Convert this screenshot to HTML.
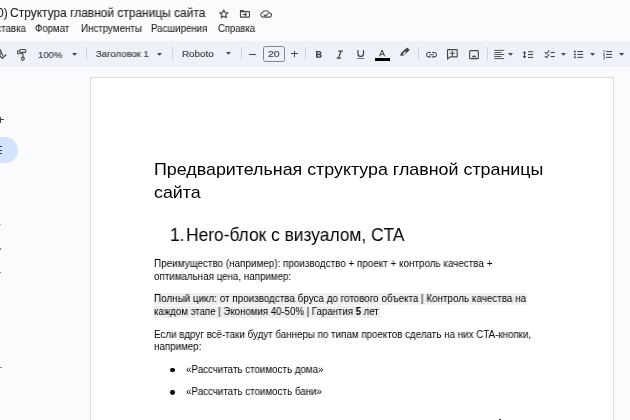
<!DOCTYPE html>
<html><head><meta charset="utf-8"><style>
html,body{margin:0;padding:0}
body{width:630px;height:420px;overflow:hidden;position:relative;background:#f9fbfd;font-family:"Liberation Sans",sans-serif}
.t{position:absolute;white-space:nowrap;transform-origin:0 0;will-change:transform;font-family:"Liberation Sans",sans-serif}
.sep{position:absolute;top:47.4px;width:1px;height:13px;background:#d0d3d7}
</style></head><body>
<div style="position:absolute;left:0;top:41px;width:630px;height:26px;background:#eef2f8"></div>
<div style="position:absolute;left:90px;top:77px;width:522px;height:360px;background:#fff;border:1px solid #dadce0"></div>
<div style="position:absolute;left:-20px;top:136.7px;width:38.2px;height:26.8px;border-radius:13.4px;background:#d3e3fd"></div>
<div class="sep" style="left:85.5px"></div>
<div class="sep" style="left:172px"></div>
<div class="sep" style="left:241.3px"></div>
<div class="sep" style="left:305.3px"></div>
<div class="sep" style="left:418.2px"></div>
<div class="sep" style="left:487.2px"></div>
<div style="position:absolute;left:262.9px;top:46.4px;width:20px;height:13.6px;border:1px solid #80868b;border-radius:2.5px"></div>
<div style="position:absolute;left:249.2px;top:53.5px;width:6.7px;height:1px;background:#444746"></div>
<div style="position:absolute;left:291.4px;top:53.3px;width:6.7px;height:1.2px;background:#444746"></div>
<div style="position:absolute;left:294.15px;top:50.6px;width:1.2px;height:6.7px;background:#444746"></div>
<div style="position:absolute;left:-2.3px;top:119.15px;width:6.3px;height:1.1px;background:#444746"></div>
<div style="position:absolute;left:0.35px;top:116.5px;width:1.1px;height:6.4px;background:#444746"></div>
<div style="position:absolute;left:0;top:146px;width:2px;height:1.3px;background:#444746"></div>
<div style="position:absolute;left:0;top:149.6px;width:2px;height:1.3px;background:#444746"></div>
<div style="position:absolute;left:0;top:153.2px;width:2px;height:1.3px;background:#444746"></div>
<div style="position:absolute;left:153.8px;top:293px;width:373.2px;height:11.5px;background:#efefef"></div>
<div style="position:absolute;left:153.8px;top:306px;width:225.8px;height:11.6px;background:#efefef"></div>
<div style="position:absolute;left:170.3px;top:367.6px;width:4.8px;height:4.8px;border-radius:50%;background:#000"></div>
<div style="position:absolute;left:170.3px;top:389.9px;width:4.8px;height:4.8px;border-radius:50%;background:#000"></div>
<div style="position:absolute;left:498.8px;top:418.6px;width:2.2px;height:1.4px;background:#333"></div>
<div style="position:absolute;left:0;top:224.3px;width:1px;height:1.2px;background:#a8b4f0"></div>
<div style="position:absolute;left:0;top:248.4px;width:1.2px;height:1.2px;background:#888"></div>
<div style="position:absolute;left:0;top:271.9px;width:1.2px;height:1.2px;background:#888"></div>
<div style="position:absolute;left:0;top:366.8px;width:1.6px;height:1.2px;background:#888"></div>
<svg style="position:absolute;left:71.80px;top:52.80px;width:5.20px;height:2.80px;overflow:visible" viewBox="7 10 10 5" preserveAspectRatio="none"><path fill="#444746" d="M7 10l5 5 5-5z"/></svg>
<svg style="position:absolute;left:156.70px;top:52.60px;width:5.10px;height:2.70px;overflow:visible" viewBox="7 10 10 5" preserveAspectRatio="none"><path fill="#444746" d="M7 10l5 5 5-5z"/></svg>
<svg style="position:absolute;left:226.40px;top:52.40px;width:4.90px;height:2.70px;overflow:visible" viewBox="7 10 10 5" preserveAspectRatio="none"><path fill="#444746" d="M7 10l5 5 5-5z"/></svg>
<svg style="position:absolute;left:508.10px;top:53.00px;width:5.00px;height:2.70px;overflow:visible" viewBox="7 10 10 5" preserveAspectRatio="none"><path fill="#444746" d="M7 10l5 5 5-5z"/></svg>
<svg style="position:absolute;left:560.80px;top:52.90px;width:5.00px;height:2.70px;overflow:visible" viewBox="7 10 10 5" preserveAspectRatio="none"><path fill="#444746" d="M7 10l5 5 5-5z"/></svg>
<svg style="position:absolute;left:589.80px;top:52.90px;width:5.10px;height:2.70px;overflow:visible" viewBox="7 10 10 5" preserveAspectRatio="none"><path fill="#444746" d="M7 10l5 5 5-5z"/></svg>
<svg style="position:absolute;left:618.90px;top:52.90px;width:5.30px;height:2.70px;overflow:visible" viewBox="7 10 10 5" preserveAspectRatio="none"><path fill="#444746" d="M7 10l5 5 5-5z"/></svg>
<svg style="position:absolute;left:315.70px;top:50.90px;width:5.70px;height:6.80px;overflow:visible" viewBox="7 4 10.75 14" preserveAspectRatio="none"><path fill="#444746" d="M15.6 10.79c.97-.67 1.65-1.77 1.65-2.79 0-2.26-1.75-4-4-4H7v14h7.04c2.09 0 3.71-1.7 3.71-3.79 0-1.52-.86-2.82-2.15-3.42zM10 6.5h3c.83 0 1.5.67 1.5 1.5s-.67 1.5-1.5 1.5h-3v-3zm3.5 9H10v-3h3.5c.83 0 1.5.67 1.5 1.5s-.67 1.5-1.5 1.5z"/></svg>
<svg style="position:absolute;left:379.30px;top:49.50px;width:6.20px;height:6.30px;overflow:visible" viewBox="5.49 3 13.020000000000001 14" preserveAspectRatio="none"><path fill="#444746" d="M5.49 17h2.42l1.27-3.58h5.65L16.09 17h2.42L13.25 3h-2.5L5.49 17zm4.42-5.61l2.03-5.79h.12l2.03 5.79H9.91z"/></svg>
<div style="position:absolute;left:375px;top:58px;width:15px;height:2.6px;background:#000"></div>
<svg style="position:absolute;left:425.70px;top:51.90px;width:11.00px;height:5.40px;overflow:visible" viewBox="2 7 20 10" preserveAspectRatio="none"><path fill="#444746" d="M3.9 12c0-1.71 1.39-3.1 3.1-3.1h4V7H7c-2.76 0-5 2.24-5 5s2.24 5 5 5h4v-1.9H7c-1.71 0-3.1-1.39-3.1-3.1zM8 13h8v-2H8v2zm9-6h-4v1.9h4c1.71 0 3.1 1.39 3.1 3.1s-1.39 3.1-3.1 3.1h-4V17h4c2.76 0 5-2.24 5-5s-2.24-5-5-5z"/></svg>
<svg style="position:absolute;left:0;top:0;overflow:visible" width="630" height="420" viewBox="0 0 630 420">
<g fill="none" stroke="#444746" stroke-width="1.1" stroke-linejoin="round" stroke-linecap="round">
<path d="M240.45 10.65 H243.4 L244.4 11.6 H249 Q249.45 11.6 249.45 12.05 V16.7 Q249.45 17.15 249 17.15 H240.9 Q240.45 17.15 240.45 16.7 Z M240.45 11.6 H244.4"/>
<path d="M243 14.5 H246.5 M245.2 13.2 L246.5 14.5 L245.2 15.8" stroke-width="1.05"/>
<path d="M263.2 17.15 H269.3 A2.05 2.05 0 0 0 269.6 13.05 A4.2 4.2 0 0 0 262.4 12.5 A2.4 2.4 0 0 0 263.2 17.15 Z"/>
<path d="M264 14.9 L265.3 16.1 L268 13.5"/>
<path d="M338.2 51.2 H342.9 M340.9 51.2 L338.6 58.1 M336.6 58.1 H341.1" stroke-width="1.25" stroke-linecap="butt"/>
<rect x="469.65" y="50.65" width="8.7" height="8.0" rx="1"/>
<path d="M545.1 52.5 L546.5 53.8 L549 50.7 M545.1 56.4 L546.5 57.7 L549 54.6" stroke-width="1.05"/>
<path d="M358 49.9 V53.7 A2.75 2.75 0 0 0 363.5 53.7 V49.9" stroke-width="1.25" stroke-linecap="butt"/>
<polygon points="223.80,9.85 224.96,12.65 227.98,12.89 225.68,14.86 226.39,17.81 223.80,16.23 221.21,17.81 221.92,14.86 219.62,12.89 222.64,12.65"/>
<rect x="19.55" y="49.55" width="6.3" height="2.8" rx="1.3"/>
<path d="M19.55 50.95 H17.65 V53.75 H23 V57.1"/>
<rect x="21.55" y="57.15" width="2.7" height="3" rx="1.3"/>
<path d="M-2.2 55.6 L0.3 49.8 L2.7 55.6 M-1.3 53.6 H1.8"/>
<path d="M-0.5 55.2 L2.3 58.3 L5.8 55" stroke-width="1.2"/>
<path d="M447.55 59.2 V50.1 Q447.55 49.6 448.05 49.6 H456.65 Q457.15 49.6 457.15 50.1 V56.4 Q457.15 56.9 456.65 56.9 H449.8 Z" />
<path d="M452.3 51.2 V55.4 M450.2 53.3 H454.4"/>
</g>
<g fill="#444746">
<rect x="494.3" y="49.9" width="9.9" height="0.9"/><rect x="494.3" y="52" width="7.3" height="0.9"/><rect x="494.3" y="54.05" width="9.9" height="0.9"/><rect x="494.3" y="56.1" width="7.3" height="0.9"/><rect x="494.3" y="58.15" width="9.9" height="0.9"/>
<path d="M471.8 57.2 L473 55.3 L473.9 56.3 L474.9 54.9 L476.4 57.2 Z"/>
<path d="M522.6 53.3 L524.5 50.9 L526.4 53.3 Z M522.6 56.1 L524.5 58.5 L526.4 56.1 Z"/>
<rect x="524" y="52.8" width="1.05" height="3.8"/>
<rect x="528" y="51.2" width="5.1" height="1.05"/><rect x="528" y="54" width="5.1" height="1.05"/><rect x="528" y="56.9" width="5.1" height="1.05"/>
<rect x="550.6" y="52" width="4.2" height="1.05"/><rect x="550.6" y="56" width="4.2" height="1.05"/>
<rect x="357.1" y="58.1" width="7.3" height="0.9" fill="#5f6368"/>
<circle cx="574.9" cy="51.5" r="1"/><circle cx="574.9" cy="54.4" r="1"/><circle cx="574.9" cy="57.3" r="1"/>
<rect x="577.3" y="51" width="5.9" height="1.05"/><rect x="577.3" y="53.9" width="5.9" height="1.05"/><rect x="577.3" y="56.8" width="5.9" height="1.05"/>
<rect x="606.1" y="51" width="6.1" height="1.05"/><rect x="606.1" y="53.9" width="6.1" height="1.05"/><rect x="606.1" y="56.8" width="6.1" height="1.05"/>
<path d="M603.6 50.1 H604.5 V52.5 H603.9 V50.7 H603.5 Z"/>
<path d="M603.3 53.3 H604.7 V54.5 H603.9 V55.1 H604.8 V55.7 H603.3 V54.2 H604.1 V53.9 H603.3 Z"/>
<path d="M603.3 56.4 H604.8 V59.3 H603.3 V58.7 H604.2 V58.1 H603.5 V57.6 H604.2 V57 H603.3 Z"/>
</g>
<path fill="#444746" fill-rule="evenodd" d="M400.1 55.7 L401 52.9 L406.5 47.9 Q407.2 47.4 407.9 48 L409.3 49.4 Q409.8 50 409.2 50.6 L403.9 55.6 Z M402.7 53.9 L405.2 51.6 L406.2 52.6 L403.7 54.9 Z"/>
</svg>
<div class=t style="left:-2.96px;top:7.40px;font-size:12.0px;line-height:12.0px;color:#1f1f1f;transform:scaleX(0.9959);-webkit-text-stroke:0.1px #1f1f1f">0)</div>
<div class=t style="left:9.80px;top:7.40px;font-size:12.0px;line-height:12.0px;color:#1f1f1f;transform:scaleX(0.9959);-webkit-text-stroke:0.1px #1f1f1f">Структура главной страницы сайта</div>
<div class=t style="left:-10.30px;top:23.70px;font-size:10.05px;line-height:10.05px;color:#1f1f1f;transform:scaleX(0.9595);-webkit-text-stroke:0.08px #1f1f1f">Вставка</div>
<div class=t style="left:35.44px;top:23.70px;font-size:10.05px;line-height:10.05px;color:#1f1f1f;transform:scaleX(0.9600);-webkit-text-stroke:0.08px #1f1f1f">Формат</div>
<div class=t style="left:80.73px;top:23.70px;font-size:10.05px;line-height:10.05px;color:#1f1f1f;transform:scaleX(0.9721);-webkit-text-stroke:0.08px #1f1f1f">Инструменты</div>
<div class=t style="left:150.94px;top:23.70px;font-size:10.05px;line-height:10.05px;color:#1f1f1f;transform:scaleX(0.9649);-webkit-text-stroke:0.08px #1f1f1f">Расширения</div>
<div class=t style="left:218.30px;top:23.70px;font-size:10.05px;line-height:10.05px;color:#1f1f1f;transform:scaleX(0.9410);-webkit-text-stroke:0.08px #1f1f1f">Справка</div>
<div class=t style="left:37.92px;top:49.60px;font-size:9.7px;line-height:9.7px;color:#444746;transform:scaleX(0.9792);-webkit-text-stroke:0.2px #444746">100%</div>
<div class=t style="left:96.40px;top:49.20px;font-size:9.7px;line-height:9.7px;color:#444746;transform:scaleX(0.9849);-webkit-text-stroke:0.2px #444746">Заголовок 1</div>
<div class=t style="left:181.58px;top:49.00px;font-size:9.7px;line-height:9.7px;color:#444746;transform:scaleX(1.0167);-webkit-text-stroke:0.2px #444746">Roboto</div>
<div class=t style="left:268.40px;top:49.20px;font-size:9.6px;line-height:9.6px;color:#444746;transform:scaleX(1.0900);-webkit-text-stroke:0.2px #444746">20</div>
<div class=t style="left:154.25px;top:160.60px;font-size:17.0px;line-height:17.0px;color:#000;transform:scaleX(1.0496);">Предварительная структура главной страницы</div>
<div class=t style="left:154.25px;top:183.90px;font-size:17.0px;line-height:17.0px;color:#000;transform:scaleX(1.0496);">сайта</div>
<div class=t style="left:170.14px;top:226.10px;font-size:18.2px;line-height:18.2px;color:#000;transform:scaleX(0.9553);">1.</div>
<div class=t style="left:185.84px;top:226.10px;font-size:18.2px;line-height:18.2px;color:#000;transform:scaleX(0.9553);">Hero-блок с визуалом, CTA</div>
<div class=t style="left:153.71px;top:258.80px;font-size:10.0px;line-height:10.0px;color:#000;transform:scaleX(0.9883);">Преимущество (например): производство + проект + контроль качества +</div>
<div class=t style="left:154.20px;top:271.60px;font-size:10.0px;line-height:10.0px;color:#000;transform:scaleX(0.9795);">оптимальная цена, например:</div>
<div class=t style="left:153.71px;top:294.00px;font-size:10.0px;line-height:10.0px;color:#000;transform:scaleX(0.9870);">Полный цикл: от производства бруса до готового объекта | Контроль качества на</div>
<div class=t style="left:153.73px;top:306.80px;font-size:10.0px;line-height:10.0px;color:#000;transform:scaleX(0.9651);">каждом этапе | Экономия 40-50% | Гарантия <b>5</b> лет</div>
<div class=t style="left:153.72px;top:329.80px;font-size:10.0px;line-height:10.0px;color:#000;transform:scaleX(0.9794);">Если вдруг всё-таки будут баннеры по типам проектов сделать на них CTA-кнопки,</div>
<div class=t style="left:153.72px;top:342.30px;font-size:10.0px;line-height:10.0px;color:#000;transform:scaleX(0.9795);">например:</div>
<div class=t style="left:185.70px;top:364.80px;font-size:10.0px;line-height:10.0px;color:#000;transform:scaleX(0.9786);">«Рассчитать стоимость дома»</div>
<div class=t style="left:185.70px;top:386.70px;font-size:10.0px;line-height:10.0px;color:#000;transform:scaleX(0.9790);">«Рассчитать стоимость бани»</div>
</body></html>
